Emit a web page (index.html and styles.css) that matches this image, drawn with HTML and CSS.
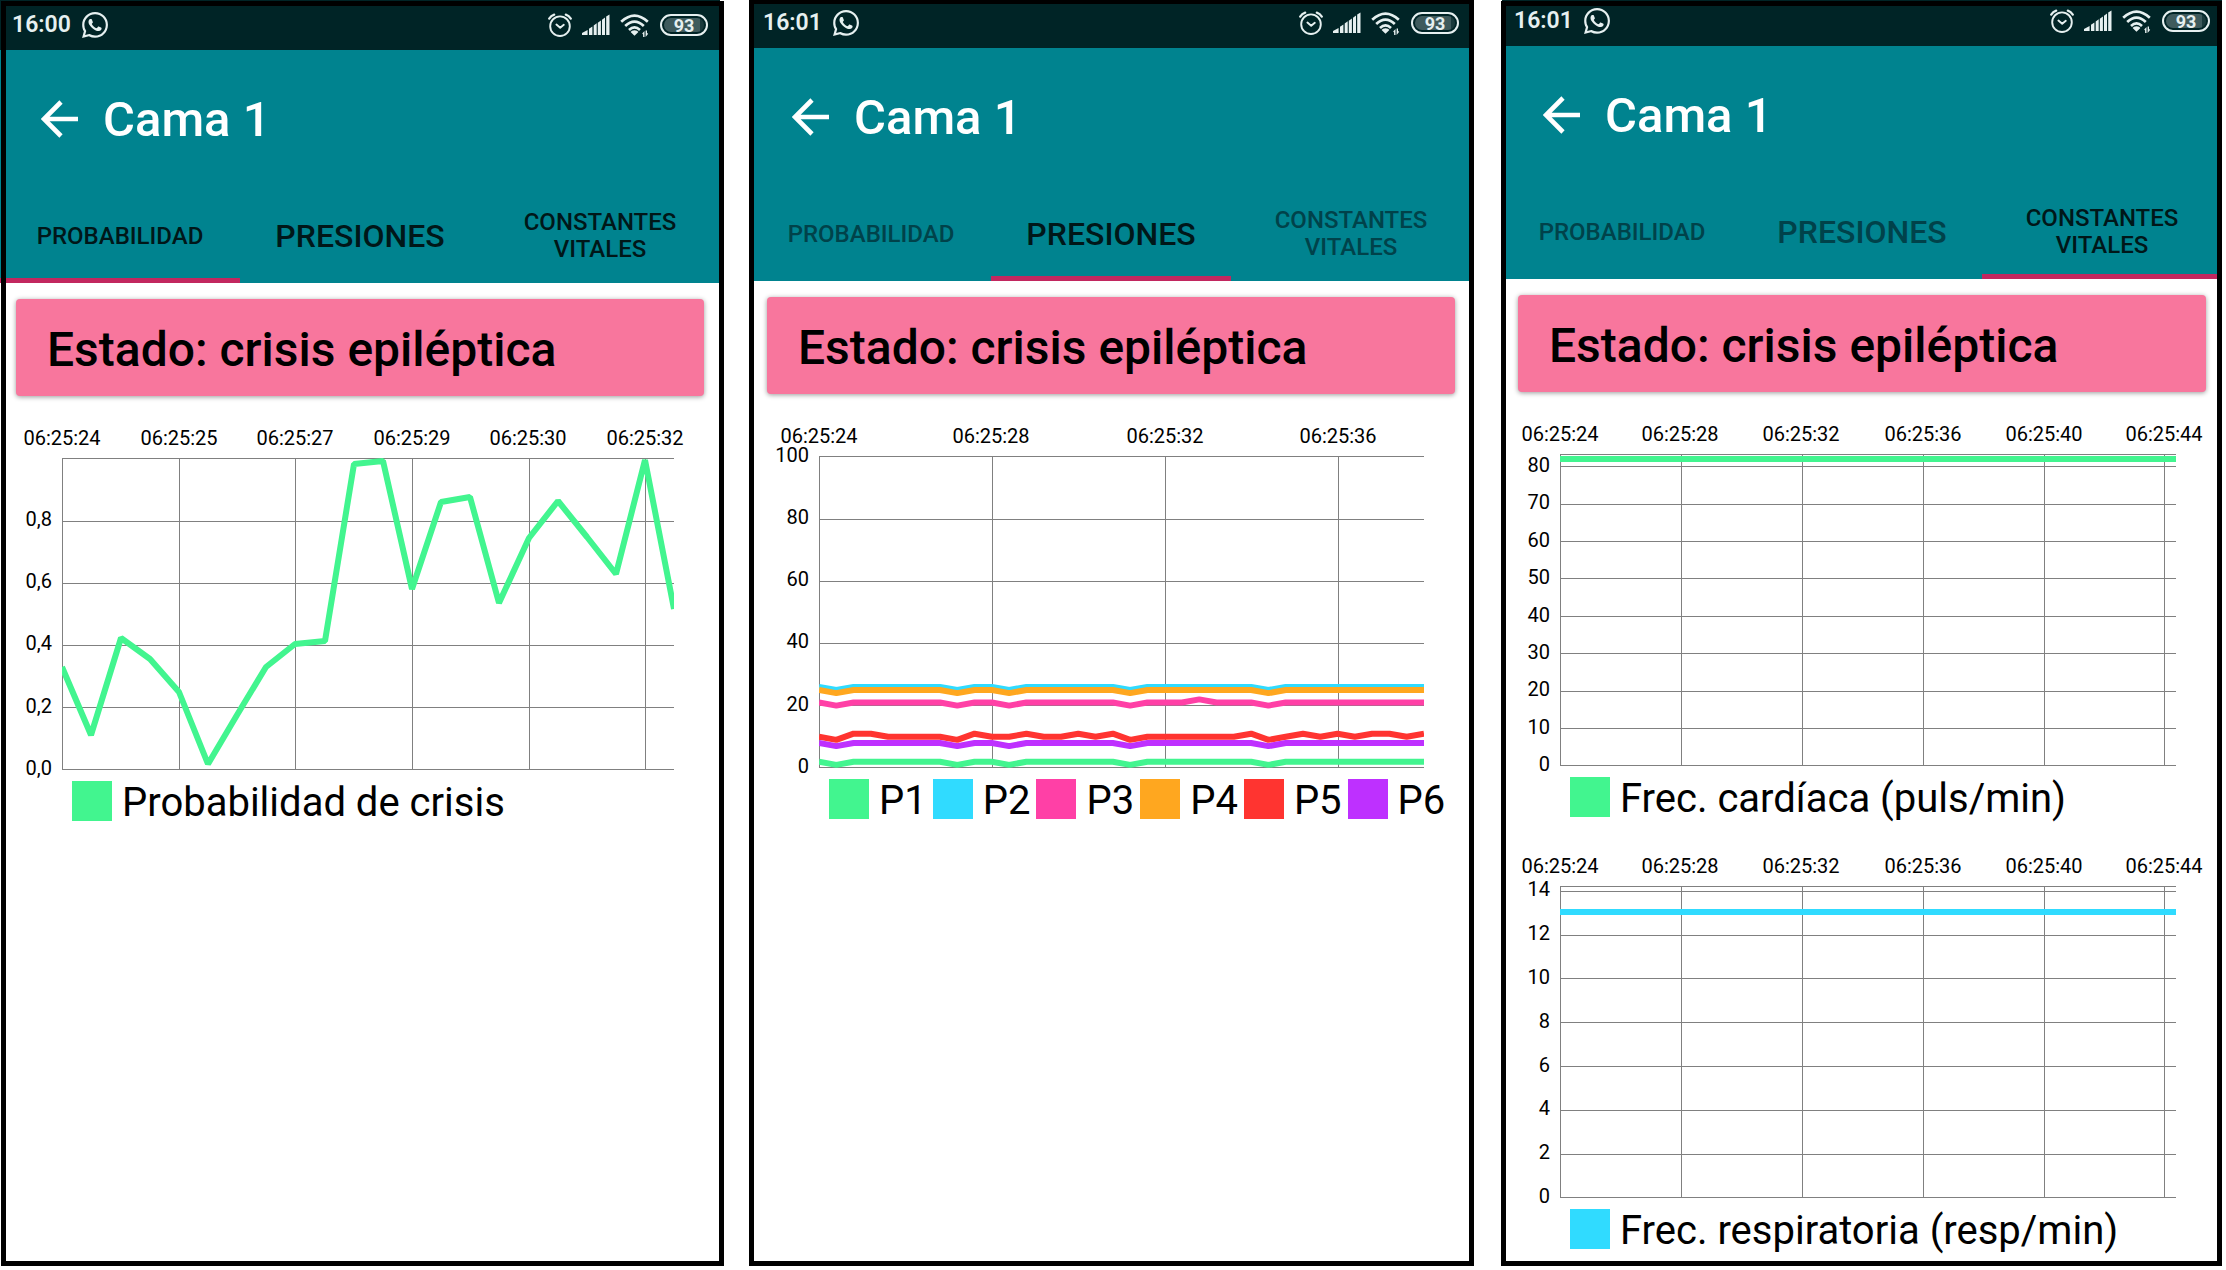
FILE: index.html
```html
<!DOCTYPE html>
<html lang="es">
<head>
<meta charset="utf-8">
<meta name="viewport" content="width=device-width, initial-scale=1">
<title>Cama 1</title>
<link rel="stylesheet" href="styles.css">
</head>
<body>
<svg class="sprite" aria-hidden="true">
  <symbol id="i-whatsapp" viewBox="0 0 24 24"><path d="M17.472 14.382c-.297-.149-1.758-.867-2.03-.967-.273-.099-.471-.148-.67.15-.197.297-.767.966-.94 1.164-.173.199-.347.223-.644.075-.297-.15-1.255-.463-2.39-1.475-.883-.788-1.48-1.761-1.653-2.059-.173-.297-.018-.458.13-.606.134-.133.298-.347.446-.52.149-.174.198-.298.298-.497.099-.198.05-.371-.025-.52-.075-.149-.669-1.612-.916-2.207-.242-.579-.487-.5-.669-.51-.173-.008-.371-.01-.57-.01-.198 0-.52.074-.792.372-.272.297-1.04 1.016-1.04 2.479 0 1.462 1.065 2.875 1.213 3.074.149.198 2.096 3.2 5.077 4.487.709.306 1.262.489 1.694.625.712.227 1.36.195 1.871.118.571-.085 1.758-.719 2.006-1.413.248-.694.248-1.289.173-1.413-.074-.124-.272-.198-.57-.347m-5.421 7.403h-.004a9.87 9.87 0 01-5.031-1.378l-.361-.214-3.741.982.998-3.648-.235-.374a9.86 9.86 0 01-1.51-5.26c.001-5.45 4.436-9.884 9.888-9.884 2.64 0 5.122 1.03 6.988 2.898a9.825 9.825 0 012.893 6.994c-.003 5.45-4.437 9.884-9.885 9.884m8.413-18.297A11.815 11.815 0 0012.05 0C5.495 0 .16 5.335.157 11.892c0 2.096.547 4.142 1.588 5.945L.057 24l6.305-1.654a11.882 11.882 0 005.683 1.448h.005c6.554 0 11.89-5.335 11.893-11.893a11.821 11.821 0 00-3.48-8.413Z"/></symbol>
  <symbol id="i-alarm" viewBox="0 0 24 26"><g fill="none" stroke="currentColor" stroke-width="1.9" stroke-linecap="round" stroke-linejoin="round"><circle cx="12" cy="14.2" r="9.8"/><path d="M8.4 12.6l3.8 3.2 3.6-3"/><path d="M1.2 6.6Q3 3.6 6.2 2.6M22.8 6.6Q21 3.6 17.8 2.6" stroke-width="2.2"/></g></symbol>
  <symbol id="i-signal" viewBox="0 0 28 26"><path d="M0 23v-2l5.6-3v5zM7 23v-6.200l3.400-2.300V23zM11.700 23v-9.500l3-2.200V23zM15.800 23V10.800l3.100-2.300V23zM20 23V7.700l3-2.200V23zM24.200 23V4.500l3.300-2V23z"/></symbol>
  <symbol id="i-wifi" viewBox="0 0 30 26"><g fill="none" stroke="currentColor" stroke-width="2.7"><path d="M1.200 9.700Q14.500-2.500 27.800 9.700"/><path d="M5.200 13.900Q14.500 5.300 23.800 13.900"/><path d="M9 17.900Q14.500 12.800 20 17.900"/></g><path d="M14.500 18.200q3 0 3.900 1.700L14.500 23.800l-3.900-3.900q.9-1.700 3.900-1.700z"/><path d="M22.200 21.500l2.300-2.500v6h-1.400v-2.500zM25.600 18.500H27V21l1.200.8-2.600 3.200z"/></symbol>
  <symbol id="i-back" viewBox="0 0 38 38"><path d="M37 19H3M20 2L3 19l17 17" fill="none" stroke="currentColor" stroke-width="4.600"/></symbol>
</svg>

<main class="board">

  <section class="phone phone--first" aria-label="Probabilidad">
    <div class="status">
      <span class="status__time">16:00</span>
      <svg class="status__app"><use href="#i-whatsapp"/></svg>
      <svg class="status__alarm"><use href="#i-alarm"/></svg>
      <svg class="status__signal"><use href="#i-signal"/></svg>
      <svg class="status__wifi"><use href="#i-wifi"/></svg>
      <span class="battery"><span class="battery__level">93</span></span>
    </div>
    <header class="appbar">
      <div class="toolbar">
        <button class="back" type="button" aria-label="Atrás"><svg class="back__icon"><use href="#i-back"/></svg></button>
        <h1 class="title">Cama 1</h1>
      </div>
      <div class="tabs" role="tablist">
        <button class="tab tab--on" type="button" role="tab" aria-selected="true">PROBABILIDAD</button>
        <button class="tab tab--large" type="button" role="tab" aria-selected="false">PRESIONES</button>
        <button class="tab" type="button" role="tab" aria-selected="false">CONSTANTES VITALES</button>
      </div>
    </header>
    <div class="content">
      <p class="state">Estado: crisis epiléptica</p>
      <figure class="chart">
        <svg class="plot" viewBox="0 0 720 361" role="img" aria-label="Probabilidad de crisis">
          <path class="grid" d="M62 38H674M62 101H674M62 163H674M62 225H674M62 287H674M62 349H674M62 38V349M179 38V349M295 38V349M412 38V349M529 38V349M645 38V349"/>
          <g class="xlabels"><text x="62" y="25">06:25:24</text><text x="179" y="25">06:25:25</text><text x="295" y="25">06:25:27</text><text x="412" y="25">06:25:29</text><text x="528" y="25">06:25:30</text><text x="645" y="25">06:25:32</text></g>
          <g class="ylabels"><text x="52" y="106">0,8</text><text x="52" y="168">0,6</text><text x="52" y="230">0,4</text><text x="52" y="293">0,2</text><text x="52" y="355">0,0</text></g>
          <svg x="62" y="38" width="612" height="312" viewBox="62 38 612 312">
            <polyline class="line green" points="62,247 91,315 121,218 150,239 179,272 208,344 237,295 266,247 295,224 325,221 354,44 383,41 412,169 441,82 470,77 499,183 529,118 558,81 587,117 616,154 645,40 674,189"/>
          </svg>
        </svg>
        <figcaption class="legend legend--probability">
          <span class="key"><i class="swatch green"></i>Probabilidad de crisis</span>
        </figcaption>
      </figure>
    </div>
  </section>

  <section class="phone phone--second" aria-label="Presiones">
    <div class="status">
      <span class="status__time">16:01</span>
      <svg class="status__app"><use href="#i-whatsapp"/></svg>
      <svg class="status__alarm"><use href="#i-alarm"/></svg>
      <svg class="status__signal"><use href="#i-signal"/></svg>
      <svg class="status__wifi"><use href="#i-wifi"/></svg>
      <span class="battery"><span class="battery__level">93</span></span>
    </div>
    <header class="appbar">
      <div class="toolbar">
        <button class="back" type="button" aria-label="Atrás"><svg class="back__icon"><use href="#i-back"/></svg></button>
        <h1 class="title">Cama 1</h1>
      </div>
      <div class="tabs tabs--dim" role="tablist">
        <button class="tab" type="button" role="tab" aria-selected="false">PROBABILIDAD</button>
        <button class="tab tab--large tab--on" type="button" role="tab" aria-selected="true">PRESIONES</button>
        <button class="tab" type="button" role="tab" aria-selected="false">CONSTANTES VITALES</button>
      </div>
    </header>
    <div class="content">
      <p class="state">Estado: crisis epiléptica</p>
      <figure class="chart">
        <svg class="plot" viewBox="0 0 720 361" role="img" aria-label="Presiones P1 a P6">
          <path class="grid" d="M68 38H673M68 101H673M68 163H673M68 225H673M68 287H673M68 349H673M68 38V349M241 38V349M414 38V349M587 38V349"/>
          <g class="xlabels"><text x="68" y="25">06:25:24</text><text x="240" y="25">06:25:28</text><text x="414" y="25">06:25:32</text><text x="587" y="25">06:25:36</text></g>
          <g class="ylabels"><text x="58" y="44">100</text><text x="58" y="106">80</text><text x="58" y="168">60</text><text x="58" y="230">40</text><text x="58" y="293">20</text><text x="58" y="355">0</text></g>
          <!-- one unit across per reading, pressure from 0 at the bottom to 100 at the top -->
          <svg x="68" y="38" width="605" height="312" viewBox="0 0 35 100" preserveAspectRatio="none">
            <polyline class="line green" points="0,98 1,99 2,98 7,98 8,99 9,98 10,98 11,99 12,98 17,98 18,99 19,98 25,98 26,99 27,98 35,98"/>
            <polyline class="line cyan" points="0,74 1,75 2,74 7,74 8,75 9,74 10,74 11,75 12,74 17,74 18,75 19,74 25,74 26,75 27,74 35,74"/>
            <polyline class="line pink" points="0,79 1,80 2,79 7,79 8,80 9,79 10,79 11,80 12,79 17,79 18,80 19,79 21,79 22,78 23,79 25,79 26,80 27,79 35,79"/>
            <polyline class="line orange" points="0,75 1,76 2,75 7,75 8,76 9,75 10,75 11,76 12,75 17,75 18,76 19,75 25,75 26,76 27,75 35,75"/>
            <polyline class="line red" points="0,90 1,91 2,89 3,89 4,90 7,90 8,91 9,89 10,90 11,90 12,89 13,90 14,90 15,89 16,90 17,89 18,91 19,90 24,90 25,89 26,91 27,90 28,89 29,90 30,89 31,90 32,89 33,89 34,90 35,89"/>
            <polyline class="line violet" points="0,92 1,93 2,92 7,92 8,93 9,92 10,92 11,93 12,92 17,92 18,93 19,92 25,92 26,93 27,92 35,92"/>
          </svg>
        </svg>
        <figcaption class="legend legend--pressure">
          <span class="key"><i class="swatch green"></i>P1</span>
          <span class="key"><i class="swatch cyan"></i>P2</span>
          <span class="key"><i class="swatch pink"></i>P3</span>
          <span class="key"><i class="swatch orange"></i>P4</span>
          <span class="key"><i class="swatch red"></i>P5</span>
          <span class="key"><i class="swatch violet"></i>P6</span>
        </figcaption>
      </figure>
    </div>
  </section>

  <section class="phone phone--third" aria-label="Constantes vitales">
    <div class="status">
      <span class="status__time">16:01</span>
      <svg class="status__app"><use href="#i-whatsapp"/></svg>
      <svg class="status__alarm"><use href="#i-alarm"/></svg>
      <svg class="status__signal"><use href="#i-signal"/></svg>
      <svg class="status__wifi"><use href="#i-wifi"/></svg>
      <span class="battery"><span class="battery__level">93</span></span>
    </div>
    <header class="appbar">
      <div class="toolbar">
        <button class="back" type="button" aria-label="Atrás"><svg class="back__icon"><use href="#i-back"/></svg></button>
        <h1 class="title">Cama 1</h1>
      </div>
      <div class="tabs tabs--dim" role="tablist">
        <button class="tab" type="button" role="tab" aria-selected="false">PROBABILIDAD</button>
        <button class="tab tab--large" type="button" role="tab" aria-selected="false">PRESIONES</button>
        <button class="tab tab--on" type="button" role="tab" aria-selected="true">CONSTANTES VITALES</button>
      </div>
    </header>
    <div class="content">
      <p class="state">Estado: crisis epiléptica</p>
      <figure class="chart">
        <svg class="plot" viewBox="0 0 720 361" role="img" aria-label="Frecuencia cardíaca">
          <path class="grid" d="M58 38H674M58 50H674M58 88H674M58 125H674M58 162H674M58 200H674M58 237H674M58 275H674M58 312H674M58 349H674M58 38V349M179 38V349M300 38V349M421 38V349M542 38V349M662 38V349"/>
          <g class="xlabels"><text x="58" y="25">06:25:24</text><text x="178" y="25">06:25:28</text><text x="299" y="25">06:25:32</text><text x="421" y="25">06:25:36</text><text x="542" y="25">06:25:40</text><text x="662" y="25">06:25:44</text></g>
          <g class="ylabels"><text x="48" y="56">80</text><text x="48" y="93">70</text><text x="48" y="131">60</text><text x="48" y="168">50</text><text x="48" y="206">40</text><text x="48" y="243">30</text><text x="48" y="280">20</text><text x="48" y="318">10</text><text x="48" y="355">0</text></g>
          <path class="line green" d="M58 43H674"/>
        </svg>
        <figcaption class="legend legend--vitals">
          <span class="key"><i class="swatch green"></i>Frec. cardíaca (puls/min)</span>
        </figcaption>
      </figure>
      <figure class="chart">
        <svg class="plot" viewBox="0 0 720 361" role="img" aria-label="Frecuencia respiratoria">
          <path class="grid" d="M58 38H674M58 43H674M58 87H674M58 130H674M58 174H674M58 218H674M58 262H674M58 306H674M58 349H674M58 38V349M179 38V349M300 38V349M421 38V349M542 38V349M662 38V349"/>
          <g class="xlabels"><text x="58" y="25">06:25:24</text><text x="178" y="25">06:25:28</text><text x="299" y="25">06:25:32</text><text x="421" y="25">06:25:36</text><text x="542" y="25">06:25:40</text><text x="662" y="25">06:25:44</text></g>
          <g class="ylabels"><text x="48" y="48">14</text><text x="48" y="92">12</text><text x="48" y="136">10</text><text x="48" y="180">8</text><text x="48" y="224">6</text><text x="48" y="267">4</text><text x="48" y="311">2</text><text x="48" y="355">0</text></g>
          <path class="line cyan" d="M58 64H674"/>
        </svg>
        <figcaption class="legend legend--vitals">
          <span class="key"><i class="swatch cyan"></i>Frec. respiratoria (resp/min)</span>
        </figcaption>
      </figure>
    </div>
  </section>

</main>
</body>
</html>
```

FILE: styles.css
```css
* { box-sizing: border-box; }

body {
  margin: 0;
  background: #fff;
  color: #000;
  font-family: Roboto, "Liberation Sans", sans-serif;
}

.sprite { display: none; }

.board {
  display: grid;
  grid-template-columns: repeat(3, minmax(0, 1fr));
  gap: 31px;
  min-height: 100vh;
  padding: 0 4px 4px 0;
  overflow: hidden;
}

/* Phone: the black frame lies over the edges of the screen */
.phone {
  --status: 50px;
  position: relative;
}
.phone::after {
  content: "";
  position: absolute;
  inset: 1px -4px 0 1px;
  border: 5px solid #000;
  pointer-events: none;
}
.phone--second { --status: 48px; }
.phone--second::after { inset: -1px -3px 0 -2px; }
.phone--third { --status: 46px; }
.phone--third::after { inset: 1px 0 0 -1px; }

/* Status bar */
.status {
  display: flex;
  align-items: flex-end;
  height: var(--status);
  padding: 0 12px 12px;
  background: #002426;
  color: #e6f0f0;
}
.status svg { height: 26px; fill: currentColor; }
.status__time {
  font-size: 23px;
  font-weight: 600;
  line-height: 26px;
}
.status .status__app { width: 26px; margin-left: 11px; }
.status__alarm { width: 24px; margin-left: auto; }
.status__signal { width: 28px; margin-left: 10px; }
.status__wifi { width: 30px; margin-left: 10px; }
.battery {
  display: flex;
  width: 48px;
  height: 22px;
  margin: 0 0 2px 10px;
  padding: 2px;
  border: 2px solid #e6f0f0;
  border-radius: 11px;
}
.battery__level {
  flex: 1;
  border-radius: 7px;
  background: linear-gradient(90deg, #3f5b5d 90%, #1a3a3c 90%);
  font-size: 18px;
  font-weight: 700;
  line-height: 15px;
  text-align: center;
}

/* App bar */
.appbar { background: #00838f; }
.toolbar {
  display: flex;
  align-items: center;
  gap: 24px;
  height: 137px;
  padding-left: 41px;
  color: #fff;
}
.back {
  padding: 0;
  border: 0;
  background: none;
  color: inherit;
}
.back__icon { display: block; width: 38px; height: 38px; }
.title {
  margin: 0;
  padding-top: 3px;
  font-size: 49px;
  font-weight: 500;
  line-height: 60px;
}
.tabs {
  display: grid;
  grid-template-columns: repeat(3, 1fr);
  height: 96px;
}
.tab {
  padding: 2px 24px 0;
  border: 0;
  background: none;
  color: #001719;
  font: 500 24px/27px Roboto, "Liberation Sans", sans-serif;
}
.tab--large { font-size: 32px; }
.tabs--dim .tab { color: #00424a; }
.tabs .tab--on { box-shadow: inset 0 -5px #c2275f; color: #001719; }

/* Content */
.content { padding-top: 16px; }
.state {
  margin: 0 16px;
  padding: 22px 31px 18px;
  border-radius: 4px;
  background: #f8769d;
  box-shadow: 0 1px 5px rgba(0, 0, 0, 0.4);
  font-size: 48px;
  font-weight: 500;
  line-height: 57px;
}

/* Charts */
.chart { margin: 24px 0 0; }
.chart + .chart { margin-top: 28px; }
.plot { display: block; width: 100%; }
.plot text { font-size: 20px; }
.xlabels { text-anchor: middle; }
.ylabels { text-anchor: end; }
.grid {
  fill: none;
  stroke: #808080;
  stroke-width: 1;
  shape-rendering: crispEdges;
}
.line {
  fill: none;
  stroke: var(--series);
  stroke-width: 6;
  stroke-linejoin: bevel;
  vector-effect: non-scaling-stroke;
}
.green { --series: #42f58f; }
.cyan { --series: #30dbff; }
.pink { --series: #ff40a6; }
.orange { --series: #ffa71f; }
.red { --series: #ff3430; }
.violet { --series: #be30ff; }

.legend {
  display: flex;
  gap: 6px;
  font-size: 40px;
  line-height: 43px;
}
.legend--probability { padding-left: 72px; }
.legend--pressure { padding-left: 78px; }
.legend--vitals { padding-left: 68px; }
.key { display: flex; gap: 10px; }
.swatch {
  width: 40px;
  height: 40px;
  background: var(--series);
}
```
